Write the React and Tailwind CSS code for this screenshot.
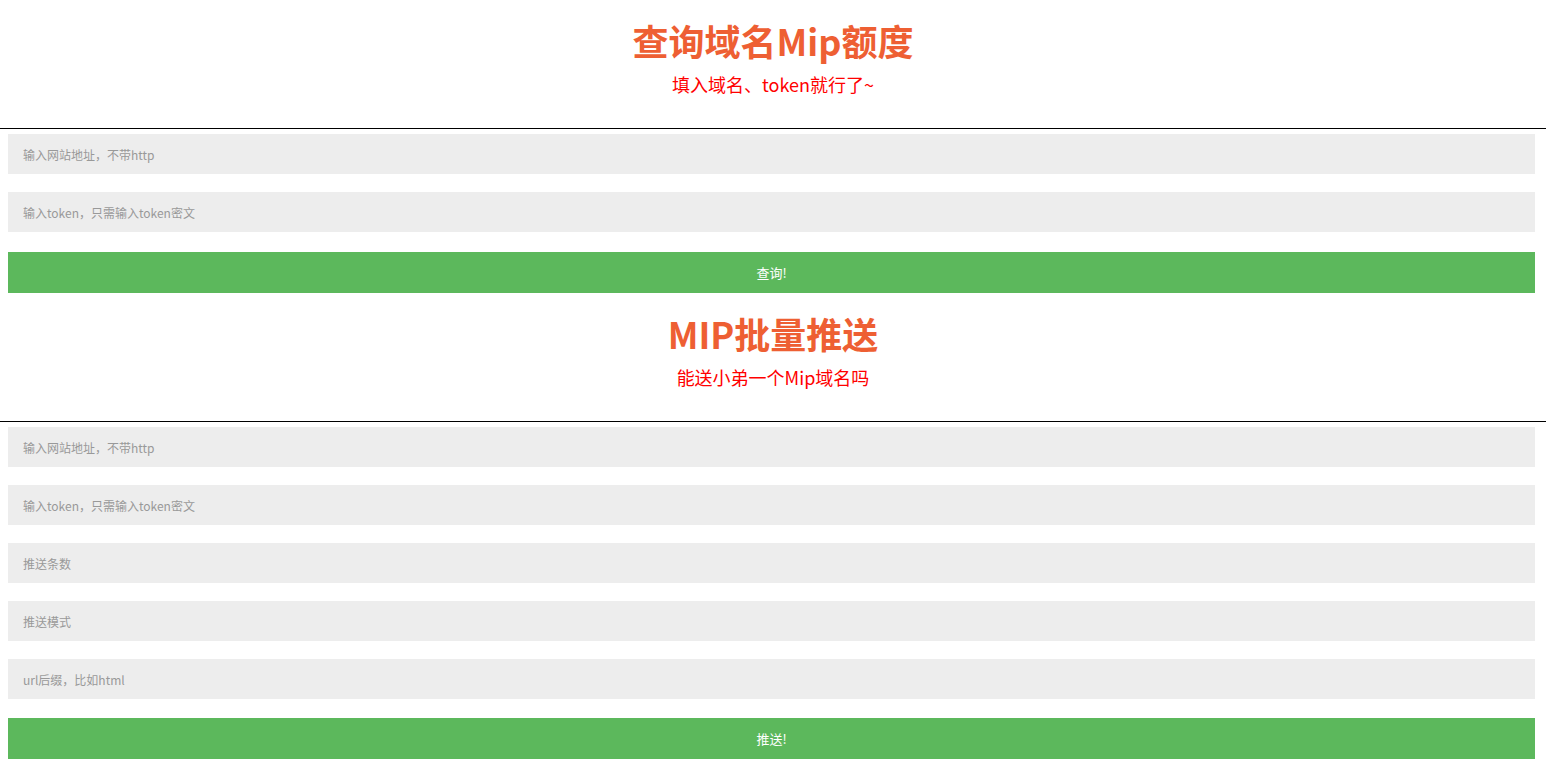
import { useState } from 'react';

const font = { fontFamily: '"Microsoft YaHei", "Noto Sans CJK SC", "Noto Sans", sans-serif' };

function Field({ placeholder, value, onChange, className = '' }) {
  return (
    <input
      type="text"
      value={value}
      onChange={(e) => onChange(e.target.value)}
      placeholder={placeholder}
      className={`block w-full h-[40px] bg-[#ededed] border-0 outline-none pl-[15px] text-[12px] text-[#555] placeholder:text-[#999] ${className}`}
    />
  );
}

function Header({ title, sub }) {
  return (
    <div className="h-[128px] flex flex-col items-center">
      <h1 className="mt-[20px] h-[40px] leading-[40px] text-[36px] font-bold text-[#ee5f33]">{title}</h1>
      <p className="mt-[12px] h-[24px] leading-[24px] text-[18px] text-[#ff0000]">{sub}</p>
    </div>
  );
}

export default function App() {
  const [site, setSite] = useState('');
  const [token, setToken] = useState('');
  const [pSite, setPSite] = useState('');
  const [pToken, setPToken] = useState('');
  const [count, setCount] = useState('');
  const [mode, setMode] = useState('');
  const [suffix, setSuffix] = useState('');

  return (
    <div className="min-h-screen bg-white" style={font}>
      <Header title="查询域名Mip额度" sub="填入域名、token就行了~" />
      <div className="border-t border-black" />
      <form className="ml-[8px] mr-[11px] pt-[5px]" onSubmit={(e) => e.preventDefault()}>
        <Field placeholder="输入网站地址，不带http" value={site} onChange={setSite} />
        <Field placeholder="输入token，只需输入token密文" value={token} onChange={setToken} className="mt-[18px]" />
        <button
          type="submit"
          className="block w-full mt-[20px] h-[41px] bg-[#5cb85c] text-white text-[13px]"
        >
          查询!
        </button>
      </form>

      <Header title="MIP批量推送" sub="能送小弟一个Mip域名吗" />
      <div className="border-t border-black" />
      <form className="ml-[8px] mr-[11px] pt-[5px]" onSubmit={(e) => e.preventDefault()}>
        <Field placeholder="输入网站地址，不带http" value={pSite} onChange={setPSite} />
        <Field placeholder="输入token，只需输入token密文" value={pToken} onChange={setPToken} className="mt-[18px]" />
        <Field placeholder="推送条数" value={count} onChange={setCount} className="mt-[18px]" />
        <Field placeholder="推送模式" value={mode} onChange={setMode} className="mt-[18px]" />
        <Field placeholder="url后缀，比如html" value={suffix} onChange={setSuffix} className="mt-[18px]" />
        <button
          type="submit"
          className="block w-full mt-[19px] h-[41px] bg-[#5cb85c] text-white text-[13px]"
        >
          推送!
        </button>
      </form>
    </div>
  );
}
